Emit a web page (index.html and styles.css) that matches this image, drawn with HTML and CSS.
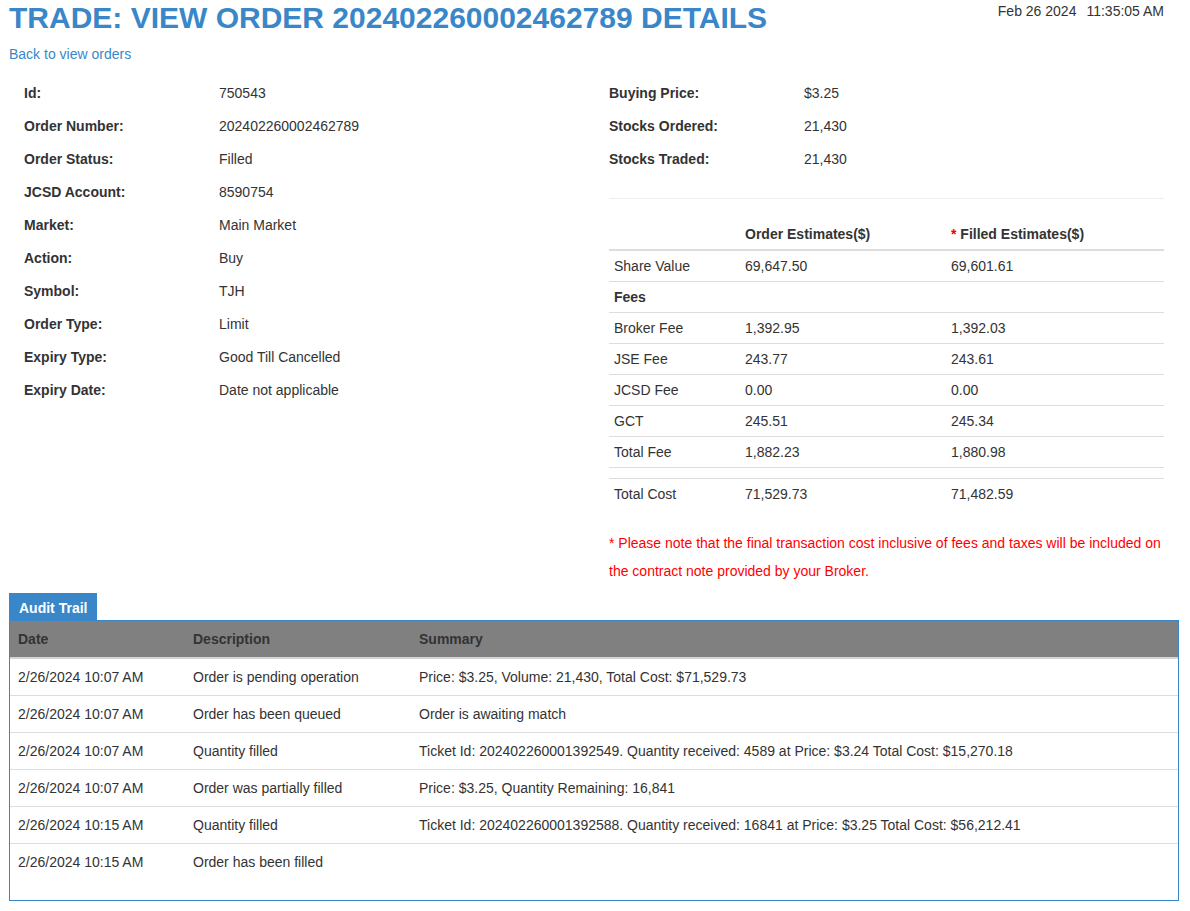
FILE: index.html
```html
<!DOCTYPE html>
<html>
<head>
<meta charset="utf-8">
<title>Trade: View Order</title>
<link rel="stylesheet" href="styles.css">
</head>
<body>
<div class="page">
  <header class="top">
    <h1 class="title">TRADE: VIEW ORDER 202402260002462789 DETAILS</h1>
    <div class="clock"><span>Feb 26 2024</span><span class="time">11:35:05 AM</span></div>
  </header>
  <a class="back" href="#">Back to view orders</a>

  <div class="cols">
    <div class="col">
      <dl class="info">
        <dt>Id:</dt><dd>750543</dd>
        <dt>Order Number:</dt><dd>202402260002462789</dd>
        <dt>Order Status:</dt><dd>Filled</dd>
        <dt>JCSD Account:</dt><dd>8590754</dd>
        <dt>Market:</dt><dd>Main Market</dd>
        <dt>Action:</dt><dd>Buy</dd>
        <dt>Symbol:</dt><dd>TJH</dd>
        <dt>Order Type:</dt><dd>Limit</dd>
        <dt>Expiry Type:</dt><dd>Good Till Cancelled</dd>
        <dt>Expiry Date:</dt><dd>Date not applicable</dd>
      </dl>
    </div>
    <div class="col">
      <dl class="info">
        <dt>Buying Price:</dt><dd>$3.25</dd>
        <dt>Stocks Ordered:</dt><dd>21,430</dd>
        <dt>Stocks Traded:</dt><dd>21,430</dd>
      </dl>
      <hr class="divider">
      <table class="est">
        <colgroup><col class="c1"><col class="c2"><col></colgroup>
        <thead>
          <tr><th></th><th>Order Estimates($)</th><th><span class="star">*</span> Filled Estimates($)</th></tr>
        </thead>
        <tbody>
          <tr><td>Share Value</td><td>69,647.50</td><td>69,601.61</td></tr>
          <tr><td class="bold">Fees</td><td></td><td></td></tr>
          <tr><td>Broker Fee</td><td>1,392.95</td><td>1,392.03</td></tr>
          <tr><td>JSE Fee</td><td>243.77</td><td>243.61</td></tr>
          <tr><td>JCSD Fee</td><td>0.00</td><td>0.00</td></tr>
          <tr><td>GCT</td><td>245.51</td><td>245.34</td></tr>
          <tr><td>Total Fee</td><td>1,882.23</td><td>1,880.98</td></tr>
          <tr class="spacer"><td></td><td></td><td></td></tr>
          <tr><td>Total Cost</td><td>71,529.73</td><td>71,482.59</td></tr>
        </tbody>
      </table>
      <p class="note">* Please note that the final transaction cost inclusive of fees and taxes will be included on the contract note provided by your Broker.</p>
    </div>
  </div>

  <section class="audit">
    <div class="tab">Audit Trail</div>
    <div class="panel">
      <table class="trail">
        <colgroup><col class="d1"><col class="d2"><col></colgroup>
        <thead>
          <tr><th>Date</th><th>Description</th><th>Summary</th></tr>
        </thead>
        <tbody>
          <tr><td>2/26/2024 10:07 AM</td><td>Order is pending operation</td><td>Price: $3.25, Volume: 21,430, Total Cost: $71,529.73</td></tr>
          <tr><td>2/26/2024 10:07 AM</td><td>Order has been queued</td><td>Order is awaiting match</td></tr>
          <tr><td>2/26/2024 10:07 AM</td><td>Quantity filled</td><td>Ticket Id: 202402260001392549. Quantity received: 4589 at Price: $3.24 Total Cost: $15,270.18</td></tr>
          <tr><td>2/26/2024 10:07 AM</td><td>Order was partially filled</td><td>Price: $3.25, Quantity Remaining: 16,841</td></tr>
          <tr><td>2/26/2024 10:15 AM</td><td>Quantity filled</td><td>Ticket Id: 202402260001392588. Quantity received: 16841 at Price: $3.25 Total Cost: $56,212.41</td></tr>
          <tr><td>2/26/2024 10:15 AM</td><td>Order has been filled</td><td></td></tr>
        </tbody>
      </table>
    </div>
  </section>
</div>
</body>
</html>
```

FILE: styles.css
```css
html, body {
  margin: 0;
  padding: 0;
  background: #fff;
}
body {
  font-family: "Liberation Sans", Arial, sans-serif;
  font-size: 14px;
  line-height: 20px;
  color: #333;
}
.page {
  width: 1170px;
  padding: 0 9px;
}
.top {
  display: flex;
  justify-content: space-between;
  align-items: flex-start;
}
.title {
  margin: 0;
  font-size: 30px;
  line-height: 36px;
  font-weight: bold;
  color: #3987c9;
}
.clock {
  padding-top: 1px;
  padding-right: 15px;
  display: flex;
  gap: 10px;
}
.back {
  display: inline-block;
  margin-top: 8px;
  color: #3987c9;
  text-decoration: none;
}
.cols {
  display: grid;
  grid-template-columns: 1fr 1fr;
  margin-top: 13px;
}
.col {
  padding: 0 15px;
}
.info {
  display: grid;
  grid-template-columns: 195px 1fr;
  margin: 0;
}
.info dt {
  font-weight: bold;
  line-height: 33px;
}
.info dd {
  margin: 0;
  line-height: 33px;
}
.divider {
  border: 0;
  border-top: 1px solid #eee;
  margin: 22px 0 20px;
}
table {
  border-collapse: collapse;
  width: 100%;
}
.est {
  margin-bottom: 20px;
}
.est col.c1 { width: 131px; }
.est col.c2 { width: 206px; }
.est th, .est td {
  padding: 5px;
  text-align: left;
  line-height: 20px;
}
.est th {
  font-weight: bold;
  border-bottom: 2px solid #ddd;
}
.est td {
  border-top: 1px solid #ddd;
}
.est .bold { font-weight: bold; }
.est .spacer td { height: 0; padding: 5px; }
.star { color: #e00; }
.note {
  margin: 0;
  color: #f00;
  line-height: 28px;
}
.audit {
  margin-top: 8px;
}
.tab {
  display: inline-block;
  vertical-align: top;
  background: #3987c9;
  color: #fff;
  font-weight: bold;
  padding: 5px 10px 2px;
}
.panel {
  border: 1px solid #3987c9;
}
.trail {
  margin-bottom: 20px;
}
.trail col.d1 { width: 175px; }
.trail col.d2 { width: 226px; }
.trail th, .trail td {
  padding: 8px;
  text-align: left;
  line-height: 20px;
}
.trail th {
  background: #808080;
  color: #333;
  font-weight: bold;
  border-bottom: 2px solid #d4d4d4;
}
.trail td {
  border-top: 1px solid #ddd;
}
```
